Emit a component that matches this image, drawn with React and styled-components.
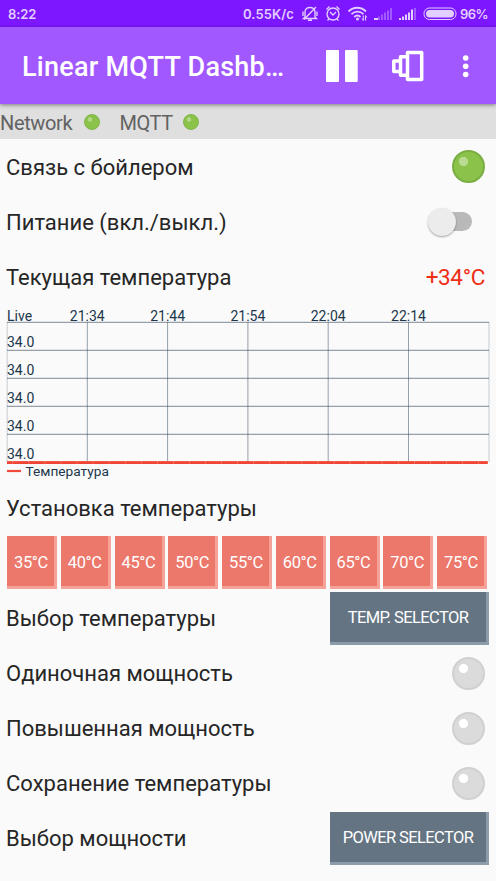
import React from "react";
import styled, { createGlobalStyle } from "styled-components";

const GlobalStyle = createGlobalStyle`
  * { box-sizing: border-box; }
  body { margin: 0; background: #fafafa; font-family: Roboto, "Noto Sans", sans-serif; }
`;

const Screen = styled.main`
  width: 496px;
  height: 881px;
  display: flex;
  flex-direction: column;
  overflow: hidden;
  background: #fafafa;
  color: #262626;
`;

const StatusBar = styled.header`
  flex: none;
  height: 27px;
  display: flex;
  align-items: center;
  padding: 1px 0 0 8px;
  background: #7c17ff;
  color: #e2ceff;
  font: 600 13px/20px Inter, sans-serif;
`;

const Clock = styled.span`
  width: 235px;
  letter-spacing: -0.1px;
`;

const Speed = styled.span`
  width: 57px;
  letter-spacing: 0.1px;
  white-space: nowrap;
`;

const StatusIcons = styled.svg`
  flex: none;
  width: 160px;
  height: 27px;
  margin-top: -1px;
`;

const Percent = styled.span`
  letter-spacing: -0.6px;
`;

const AppBar = styled.nav`
  flex: none;
  height: 77px;
  display: flex;
  align-items: center;
  padding: 3px 0 0 22px;
  background: #a158ff;
  box-shadow: 0 1px 4px rgba(0, 0, 0, 0.45);
  z-index: 1;
`;

const Title = styled.h1`
  margin: 0;
  width: 304px;
  color: #fff;
  font-size: 27px;
  font-weight: 500;
  line-height: 34px;
  white-space: nowrap;
  letter-spacing: 0.24px;
`;

const BarIcon = styled.svg`
  flex: none;
  width: ${(p) => p.$w}px;
  height: 34px;
  margin-right: ${(p) => p.$gap || 0}px;
  margin-top: -3px;
`;

const Connections = styled.div`
  flex: none;
  height: 35px;
  display: flex;
  align-items: center;
  background: #dfdfdf;
  color: #626262;
  font-size: 20px;
  letter-spacing: -0.35px;
`;

const ConnectionName = styled.span`
  width: ${(p) => p.$w}px;
  padding-top: 2px;
`;

const SmallLed = styled.i`
  width: 16px;
  height: 16px;
  margin-right: 20px;
  border-radius: 50%;
  border: 1px solid #7fb445;
  background: radial-gradient(circle at 5px 4.5px, #b4d889 0 1.8px, #8bc34a 2.6px);
`;

const Row = styled.section`
  flex: none;
  height: ${(p) => p.$h || 55}px;
  display: flex;
  align-items: center;
  justify-content: space-between;
  padding: 0 ${(p) => p.$right || 11}px 0 6px;
`;

const Label = styled.span`
  padding-top: 2px;
  font-size: 22px;
  line-height: 28px;
  white-space: nowrap;
`;

const Led = styled.i`
  width: 33px;
  height: 33px;
  border-radius: 50%;
  border: 2.5px solid ${(p) => (p.$on ? "#7aad43" : "#d0d0d0")};
  background: radial-gradient(
    circle at 9.5px 9.5px,
    ${(p) => (p.$on ? "#b9dc92" : "#ffffff")} 0 4.2px,
    ${(p) => (p.$on ? "#8bc34a" : "#dbdbdb")} 5px
  );
`;

const Switch = styled.span`
  width: 45px;
  height: 29px;
  margin-right: 12px;
  display: flex;
  align-items: center;
`;

const Thumb = styled.i`
  flex: none;
  width: 28px;
  height: 28px;
  border-radius: 50%;
  background: #ececec;
  box-shadow: 0 1px 2px rgba(0, 0, 0, 0.35);
  z-index: 1;
`;

const Track = styled.i`
  flex: none;
  width: 30px;
  height: 19px;
  margin-left: -14px;
  border-radius: 10px;
  background: #b9b9b9;
`;

const Reading = styled.strong`
  color: #ed2d16;
  font-size: 22.5px;
  font-weight: 400;
  letter-spacing: -0.35px;
  padding-top: 1px;
`;

const Chart = styled.svg`
  flex: none;
  display: block;
  width: 496px;
  height: 177px;
  font: 14px Roboto, sans-serif;
  fill: #20364b;
`;

const Legend = styled.text`
  font-size: 13.7px;
`;

const Presets = styled.div`
  flex: none;
  height: 55px;
  display: flex;
  gap: 3.75px;
  padding: 0.4px 0 0 7px;
`;

const TileButton = styled.button`
  flex: none;
  width: ${(p) => p.$w}px;
  height: ${(p) => p.$h}px;
  padding: 3px 0 0;
  border: solid ${(p) => (p.$slate ? "#8e9ba8" : "#f7a298")};
  border-width: 0 3px 3px 0;
  background: ${(p) => (p.$slate ? "#647482" : "#ec776b")};
  color: #fff;
  font: 400 16.5px/20px Roboto, sans-serif;
  letter-spacing: ${(p) => (p.$slate ? "-0.6px" : "-0.4px")};
  text-indent: 1px;
  white-space: nowrap;
`;

const TIMES = ["21:34", "21:44", "21:54", "22:04", "22:14"];
const PRESETS = [35, 40, 45, 50, 55, 60, 65, 70, 75];
const STEP = 80.3;

function PhoneStatus() {
  return (
    <StatusBar>
      <Clock>8:22</Clock>
      <Speed>0.55K/c</Speed>
      <StatusIcons viewBox="300 0 160 27" fill="none" stroke="#e2ceff" strokeWidth="1.4">
        <path d="M305 17V12c0-6 10-6 10 0v5l1.500 1.500h-13L305 17M308 20.300h4M303 11.500v4.500M317 11.500v4.500M304 19.500 316 7" />
        <circle cx="333" cy="14" r="6" />
        <path d="m330 12 3 3 3-3M326.500 9.500l3-3M339.500 9.500l-3-3M329 19l-1.500 1.500M337 19l1.500 1.500" />
        <path d="M348.500 11.500c5-5 12.500-5 17.500 0M351.500 14.200c3.500-3.300 8.500-3.300 12 0M354.200 17c2-1.800 4.500-1.800 6.300 0" strokeWidth="1.8" />
        <circle cx="357.500" cy="19" r="1.500" fill="#e2ceff" stroke="none" />
        <path d="M363.300 15.500v5m-1.300-2 1.300 2M365.500 20.500v-5m1.300 2-1.300-2" strokeWidth="1" />
        <g stroke="none" fill="#a05aff">
          <path fill="#e2ceff" d="M374 18h4v2h-4z" />
          <path d="M378 16.500h2V20h-2zM381 14.500h2V20h-2zM384 12.500h2V20h-2zM387 10.500h2V20h-2zM390 8h2v12h-2z" />
        </g>
        <g stroke="none" fill="#e2ceff">
          <path d="M399 18h2v2h-2zM402 16.500h2V20h-2zM405 14.500h2V20h-2zM408 12.500h2V20h-2zM411 9.500h2V20h-2z" />
          <path fill="#a05aff" d="M414 8h2v12h-2z" />
        </g>
        <rect x="424" y="8" width="32" height="11.500" rx="5.500" strokeWidth="1" />
        <rect x="426" y="10" width="28" height="7.500" rx="3.700" fill="#e2ceff" stroke="none" />
      </StatusIcons>
      <Percent>96%</Percent>
    </StatusBar>
  );
}

function Toolbar() {
  return (
    <AppBar>
      <Title>Linear MQTT Dashb…</Title>
      <BarIcon $w={32} $gap={34} viewBox="0 0 32 34" fill="#fff">
        <rect y="1" width="13" height="32" rx="1" />
        <rect x="19" y="1" width="12.700" height="32" rx="1" />
      </BarIcon>
      <BarIcon $w={32} $gap={38} viewBox="0 0 32 34" fill="none" stroke="#fff" strokeWidth="3.500" strokeLinejoin="round">
        <rect x="15.500" y="3.500" width="14.200" height="27" />
        <path d="M14 7.700H8.500v18.600H14M7 12H1.800v10.500H7" />
      </BarIcon>
      <BarIcon $w={8} viewBox="0 0 8 34" fill="#fff">
        <circle cx="3.700" cy="9" r="2.800" />
        <circle cx="3.700" cy="17.200" r="2.800" />
        <circle cx="3.700" cy="25.500" r="2.800" />
      </BarIcon>
    </AppBar>
  );
}

function TemperatureChart() {
  return (
    <Chart viewBox="0 304 496 177">
      <g fill="none" stroke="#32465a" strokeOpacity="0.5">
        {[0, 1, 2, 3, 4].map((i) => (
          <path key={i} d={`M7 ${322.4 + i * 28}H489`} strokeWidth="1.1" />
        ))}
        {TIMES.map((t, i) => (
          <path key={t} d={`M${87.3 + i * STEP} 322V462`} strokeWidth="1" />
        ))}
        <path d="M7.200 322V462M489 322V462" strokeOpacity="0.25" />
      </g>
      <text x="7" y="321">Live</text>
      {TIMES.map((t, i) => (
        <text key={t} x={87.3 + i * STEP} y="321" textAnchor="middle">{t}</text>
      ))}
      {[0, 1, 2, 3, 4].map((i) => (
        <text key={i} x="7" y={347 + i * 28}>34.0</text>
      ))}
      <path d="M7 462.700H488" stroke="#f4846f" strokeWidth="2.800" />
      <path d="M7 462.700H487.500" stroke="#f04435" strokeWidth="2.800" strokeDasharray="15.500 .56" strokeDashoffset="10" />
      <path d="M7 471H21" stroke="#f04a3b" strokeWidth="2.200" />
      <Legend x="25.500" y="476">Температура</Legend>
    </Chart>
  );
}

function LedRow({ label, on }) {
  return (
    <Row>
      <Label>{label}</Label>
      <Led $on={on} />
    </Row>
  );
}

export default function App() {
  return (
    <>
      <GlobalStyle />
      <Screen>
        <PhoneStatus />
        <Toolbar />
        <Connections>
          <ConnectionName $w={83.5}>Network</ConnectionName>
          <SmallLed />
          <ConnectionName $w={63.5}>MQTT</ConnectionName>
          <SmallLed />
        </Connections>
        <LedRow label="Связь с бойлером" on />
        <Row>
          <Label>Питание (вкл./выкл.)</Label>
          <Switch role="switch" aria-checked="false">
            <Thumb />
            <Track />
          </Switch>
        </Row>
        <Row>
          <Label>Текущая температура</Label>
          <Reading>+34°C</Reading>
        </Row>
        <TemperatureChart />
        <Row $h={54.5}>
          <Label>Установка температуры</Label>
        </Row>
        <Presets>
          {PRESETS.map((t) => (
            <TileButton key={t} $w={50} $h={53.5}>{t}°C</TileButton>
          ))}
        </Presets>
        <Row $right={7.5}>
          <Label>Выбор температуры</Label>
          <TileButton $slate $w={159} $h={53}>TEMP. SELECTOR</TileButton>
        </Row>
        <LedRow label="Одиночная мощность" />
        <LedRow label="Повышенная мощность" />
        <LedRow label="Сохранение температуры" />
        <Row $right={7.5}>
          <Label>Выбор мощности</Label>
          <TileButton $slate $w={159} $h={53}>POWER SELECTOR</TileButton>
        </Row>
      </Screen>
    </>
  );
}
